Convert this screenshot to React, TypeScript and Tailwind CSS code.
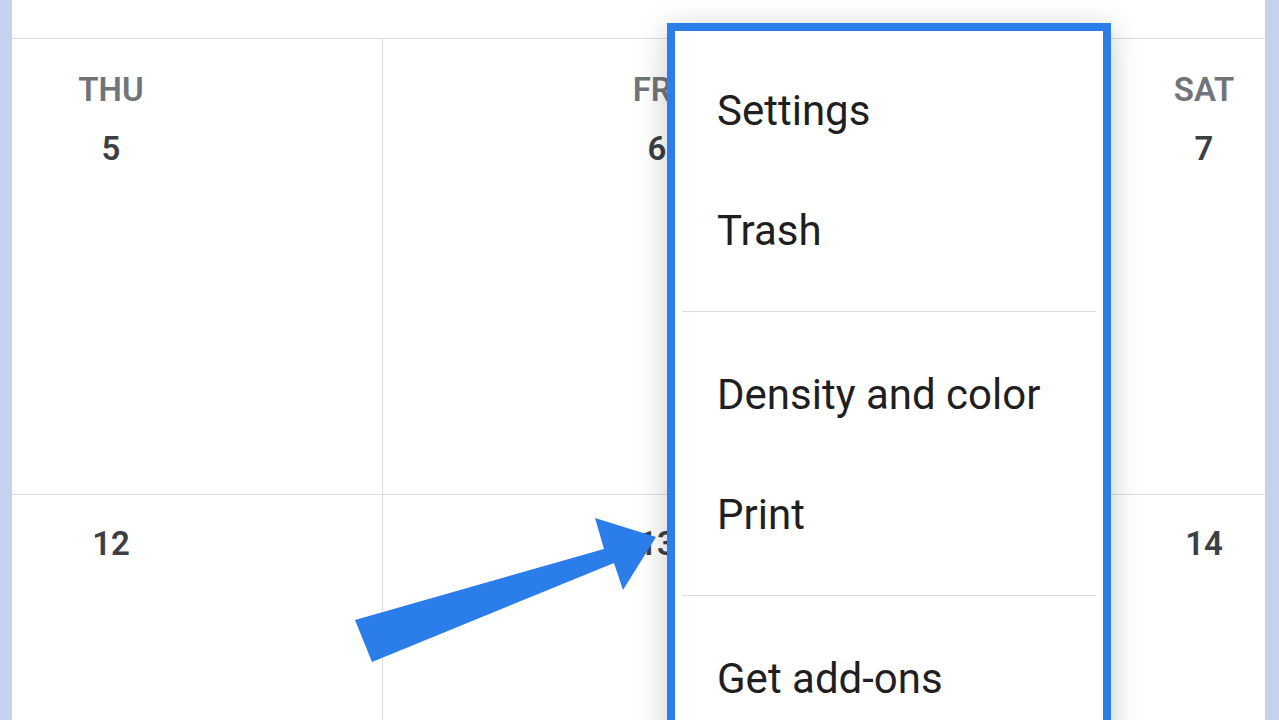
import React from 'react';

// Calendar week columns: label centre offsets match the cropped view
const COLUMNS = [
  { day: 'THU', dates: ['5', '12'], width: 'w-[371px]', box: 'w-[198px]', align: 'justify-start' },
  { day: 'FRI', dates: ['6', '13'], width: 'w-[549px]', box: 'w-[554px]', align: 'justify-center' },
  { day: 'SAT', dates: ['7', '14'], width: 'flex-1', box: 'w-[122px]', align: 'justify-end' },
];

const MENU_GROUPS = [
  { items: ['Settings', 'Trash'], pad: 'pt-[19px] pb-[21px]' },
  { items: ['Density and color', 'Print'], pad: 'pt-[22px] pb-[21px]' },
  { items: ['Get add-ons'], pad: 'pt-[22px] pb-[20px]' },
];

function DayCell({ col, row }: { col: (typeof COLUMNS)[number]; row: number }) {
  return (
    <div className={`${col.width} flex ${col.align} ${col.width === 'flex-1' ? '' : 'border-r border-[#dadce0]'}`}>
      <div className={`${col.box} flex flex-col items-center`}>
        {row === 0 ? (
          <>
            <span className="mt-[33px] text-[33px] leading-[36px] font-semibold text-[#70757a]">{col.day}</span>
            <span className="mt-[23px] text-[33px] leading-[36px] font-semibold text-[#3c4043]">{col.dates[0]}</span>
          </>
        ) : (
          <span className="mt-[31px] text-[33px] leading-[36px] font-semibold text-[#3c4043]">{col.dates[1]}</span>
        )}
      </div>
    </div>
  );
}

export default function App() {
  return (
    <div className="relative w-[1279px] h-[720px] overflow-hidden flex bg-white" style={{ fontFamily: 'Roboto, "Liberation Sans", sans-serif' }}>
      <div className="w-[12px] bg-[#c4d2ee]" />

      <div className="flex-1 flex flex-col">
        <div className="h-[39px] border-b border-[#dadce0]" />
        <div className="h-[456px] flex border-b border-[#dadce0]">
          {COLUMNS.map((c) => (
            <DayCell key={c.day} col={c} row={0} />
          ))}
        </div>
        <div className="flex-1 flex">
          {COLUMNS.map((c) => (
            <DayCell key={c.day} col={c} row={1} />
          ))}
        </div>
      </div>

      <div className="w-[14px] bg-[#c4d2ee]" />

      {/* Dropdown menu */}
      <div className="absolute left-[667px] top-[23px] w-[444px] h-[720px] border-[8px] border-[#2b7de9] bg-white shadow-[0_6px_28px_rgba(0,0,0,0.22)]">
        {MENU_GROUPS.map((group, i) => (
          <div key={i} className={`${group.pad} mx-[7px] ${i < MENU_GROUPS.length - 1 ? 'border-b border-[#dadce0]' : ''}`}>
            {group.items.map((item) => (
              <div key={item} className="h-[120px] flex items-center pl-[35px] text-[42px] text-[#1f1f22]">
                {item}
              </div>
            ))}
          </div>
        ))}
      </div>

      {/* Annotation arrow */}
      <svg className="absolute left-0 top-0 pointer-events-none" width="1279" height="720" viewBox="0 0 1279 720">
        <polygon
          points="355,620 604,549 595,518 656,537 623,590 614,563 372,662"
          fill="#2b7de9"
        />
      </svg>
    </div>
  );
}
